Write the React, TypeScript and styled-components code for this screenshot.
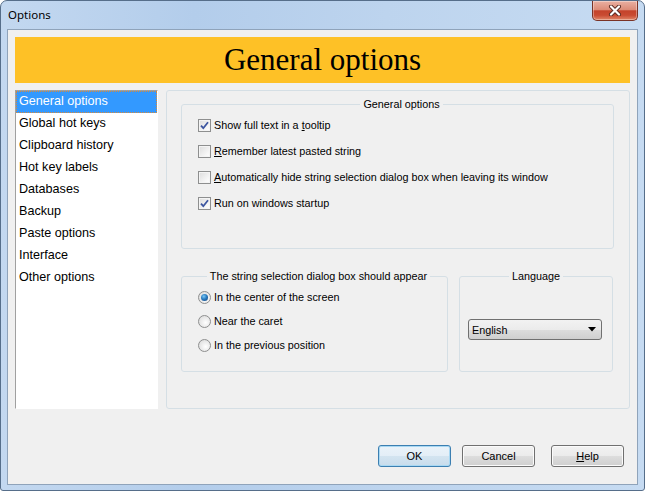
import styled, { createGlobalStyle } from 'styled-components'

const GlobalStyle = createGlobalStyle`
  html, body {
    margin: 0;
    padding: 0;
    background: #ffffff;
  }
  body {
    font-family: "Liberation Sans", Arial, sans-serif;
    font-size: 10.8px;
    color: #000;
  }
`

const Window = styled.div`
  width: 645px;
  height: 491px;
  box-sizing: border-box;
  display: flex;
  flex-direction: column;
  border: 1px solid #566e8a;
  border-radius: 7px 7px 3px 3px;
  background: linear-gradient(90deg, #c3d8f0, #b3cdeb 30%, #bdd4ee 60%, #c6dbf2);
  overflow: hidden;
  padding: 0 6px 5px 6px;
`

const TitleBar = styled.div`
  height: 28px;
  display: flex;
  align-items: flex-start;
  justify-content: space-between;
`

const Title = styled.span`
  font-family: "Noto Sans", "Open Sans", sans-serif;
  font-size: 11.5px;
  line-height: 14px;
  padding: 7px 0 0 1px;
  color: #000;
`

const CloseButton = styled.div`
  width: 46px;
  height: 20px;
  box-sizing: border-box;
  border: 1px solid #7a3326;
  border-top: none;
  border-radius: 0 0 5px 5px;
  background: linear-gradient(#eab0a2 0%, #dd8c78 45%, #c4432b 52%, #c94b32 75%, #e08668 100%);
  display: flex;
  align-items: center;
  justify-content: center;
  box-shadow: inset 0 0 0 1px rgba(255, 255, 255, 0.35);
`

const Client = styled.div`
  flex: 1;
  display: flex;
  flex-direction: column;
  background: #f0f0f0;
  border: 1px solid #8fa3ba;
  padding: 7px 7px 17px 7px;
`

const Banner = styled.div`
  height: 46px;
  background: #fec126;
  display: flex;
  align-items: center;
  justify-content: center;
  font-family: "Liberation Serif", "Times New Roman", serif;
  font-size: 31px;
  color: #000;
`

const Body = styled.div`
  margin-top: 7px;
  height: 319px;
  display: flex;
  gap: 8px;
`

const Sidebar = styled.div`
  width: 143px;
  box-sizing: border-box;
  background: #ffffff;
  border-top: 1px solid #a0a0a0;
  border-left: 1px solid #a0a0a0;
  border-right: 1px solid #ffffff;
  border-bottom: 1px solid #ffffff;
  display: flex;
  flex-direction: column;
`

const NavItem = styled.div<{ $active?: boolean }>`
  height: 22px;
  line-height: 20px;
  padding-left: 3px;
  font-size: 12.6px;
  color: ${(p) => (p.$active ? '#ffffff' : '#000000')};
  background: ${(p) => (p.$active ? '#3399ff' : 'transparent')};
  outline: ${(p) => (p.$active ? '1px dotted #d88a3a' : 'none')};
  outline-offset: -1px;
`

const Panel = styled.div`
  flex: 1;
  box-sizing: border-box;
  border: 1px solid #d5dfe5;
  border-radius: 3px;
  padding: 6px 15px 0 14px;
  display: flex;
  flex-direction: column;
`

const Group = styled.fieldset<{ $h: number; $w?: number }>`
  margin: 0;
  box-sizing: border-box;
  height: ${(p) => p.$h}px;
  width: ${(p) => (p.$w ? `${p.$w}px` : 'auto')};
  min-width: 0;
  border: 1px solid #d5dfe5;
  border-radius: 3px;
  padding: 0 8px 0 16px;
`

const Legend = styled.legend`
  margin: 0 auto;
  padding: 0 3px;
  line-height: 14px;
  font-size: 10.8px;
`

const Rows = styled.div<{ $top: number }>`
  padding-top: ${(p) => p.$top}px;
  display: flex;
  flex-direction: column;
`

const OptionRow = styled.label<{ $h: number }>`
  height: ${(p) => p.$h}px;
  display: flex;
  align-items: center;
  gap: 3px;
  white-space: nowrap;
`

const CheckBox = styled.span`
  width: 13px;
  height: 13px;
  box-sizing: border-box;
  border: 1px solid #8e8f8f;
  background: linear-gradient(135deg, #dcdcdc, #f6f6f6 70%, #ffffff);
  box-shadow: inset 0 0 0 1px #f4f4f4;
  display: flex;
  align-items: center;
  justify-content: center;
  flex: none;
`

const Radio = styled.span`
  width: 13px;
  height: 13px;
  box-sizing: border-box;
  border: 1px solid #8e8f8f;
  border-radius: 50%;
  background: radial-gradient(circle at 60% 60%, #ffffff, #e2e2e2 70%, #cfcfcf);
  display: flex;
  align-items: center;
  justify-content: center;
  flex: none;
`

const RadioDot = styled.span`
  width: 7px;
  height: 7px;
  border-radius: 50%;
  background: radial-gradient(circle at 40% 35%, #7cc8f5, #2a7cc0 45%, #133f78);
`

const BottomRow = styled.div`
  margin-top: 20px;
  display: flex;
  gap: 11px;
`

const SelectBox = styled.div`
  width: 134px;
  height: 21px;
  box-sizing: border-box;
  border: 1px solid #707070;
  border-radius: 3px;
  background: linear-gradient(#f2f2f2 0%, #ebebeb 50%, #dddddd 51%, #cfcfcf 100%);
  display: flex;
  align-items: center;
  justify-content: space-between;
  padding: 0 5px 0 3px;
`

const Spacer = styled.div`
  flex: 1;
`

const Footer = styled.div`
  display: flex;
  justify-content: flex-end;
  padding-right: 6px;
`

const Button = styled.button<{ $primary?: boolean; $gap?: number }>`
  width: 73px;
  height: 22px;
  margin-left: ${(p) => p.$gap ?? 0}px;
  font-family: "Liberation Sans", Arial, sans-serif;
  font-size: 11px;
  color: #000;
  border-radius: 3px;
  padding: 0;
  border: 1px solid ${(p) => (p.$primary ? '#3c7fb1' : '#707070')};
  background: ${(p) =>
    p.$primary
      ? 'linear-gradient(#eaf3f9 0%, #e3eef7 50%, #d3e4f0 51%, #c8dcec 100%)'
      : 'linear-gradient(#f2f2f2 0%, #ebebeb 50%, #dddddd 51%, #cfcfcf 100%)'};
  box-shadow: ${(p) => (p.$primary ? 'inset 0 0 0 1px #a8d8f3' : 'inset 0 0 0 1px #fbfbfb')};
`

const navItems = [
  'General options',
  'Global hot keys',
  'Clipboard history',
  'Hot key labels',
  'Databases',
  'Backup',
  'Paste options',
  'Interface',
  'Other options',
]

const Check = () => (
  <svg width="9" height="9" viewBox="0 0 9 9">
    <path d="M1 4.6 L3.3 7.2 L8 1.2" fill="none" stroke="#3c55a0" strokeWidth="1.8" />
  </svg>
)

const CheckOption = ({ checked, children }: { checked?: boolean; children: React.ReactNode }) => (
  <OptionRow $h={26}>
    <CheckBox>{checked && <Check />}</CheckBox>
    <span>{children}</span>
  </OptionRow>
)

const RadioOption = ({ checked, children }: { checked?: boolean; children: React.ReactNode }) => (
  <OptionRow $h={24}>
    <Radio>{checked && <RadioDot />}</Radio>
    <span>{children}</span>
  </OptionRow>
)

const App = () => {
  return (
    <>
      <GlobalStyle />
      <Window>
        <TitleBar>
          <Title>Options</Title>
          <CloseButton>
            <svg width="14" height="11" viewBox="0 0 14 11">
              <path d="M3 1.5 L11 9.5 M11 1.5 L3 9.5" stroke="#5a2a22" strokeWidth="4" strokeLinecap="round" />
              <path d="M3 1.5 L11 9.5 M11 1.5 L3 9.5" stroke="#ffffff" strokeWidth="2.2" strokeLinecap="round" />
            </svg>
          </CloseButton>
        </TitleBar>
        <Client>
          <Banner>General options</Banner>
          <Body>
            <Sidebar>
              {navItems.map((item, i) => (
                <NavItem key={item} $active={i === 0}>
                  {item}
                </NavItem>
              ))}
            </Sidebar>
            <Panel>
              <Group $h={152}>
                <Legend>General options</Legend>
                <Rows $top={1}>
                  <CheckOption checked>
                    Show full text in a <u>t</u>ooltip
                  </CheckOption>
                  <CheckOption>
                    <u>R</u>emember latest pasted string
                  </CheckOption>
                  <CheckOption>
                    <u>A</u>utomatically hide string selection dialog box when leaving its window
                  </CheckOption>
                  <CheckOption checked>Run on windows startup</CheckOption>
                </Rows>
              </Group>
              <BottomRow>
                <Group $h={103} $w={267}>
                  <Legend>The string selection dialog box should appear</Legend>
                  <Rows $top={2}>
                    <RadioOption checked>In the center of the screen</RadioOption>
                    <RadioOption>Near the caret</RadioOption>
                    <RadioOption>In the previous position</RadioOption>
                  </Rows>
                </Group>
                <Group $h={103} $w={154} style={{ paddingLeft: 8 }}>
                  <Legend>Language</Legend>
                  <Rows $top={36}>
                    <SelectBox>
                      <span>English</span>
                      <svg width="8" height="5" viewBox="0 0 8 5">
                        <path d="M0 0 H8 L4 4.5 Z" fill="#000" />
                      </svg>
                    </SelectBox>
                  </Rows>
                </Group>
              </BottomRow>
            </Panel>
          </Body>
          <Spacer />
          <Footer>
            <Button $primary>OK</Button>
            <Button $gap={11}>Cancel</Button>
            <Button $gap={16}>
              <u>H</u>elp
            </Button>
          </Footer>
        </Client>
      </Window>
    </>
  )
}

export default App
